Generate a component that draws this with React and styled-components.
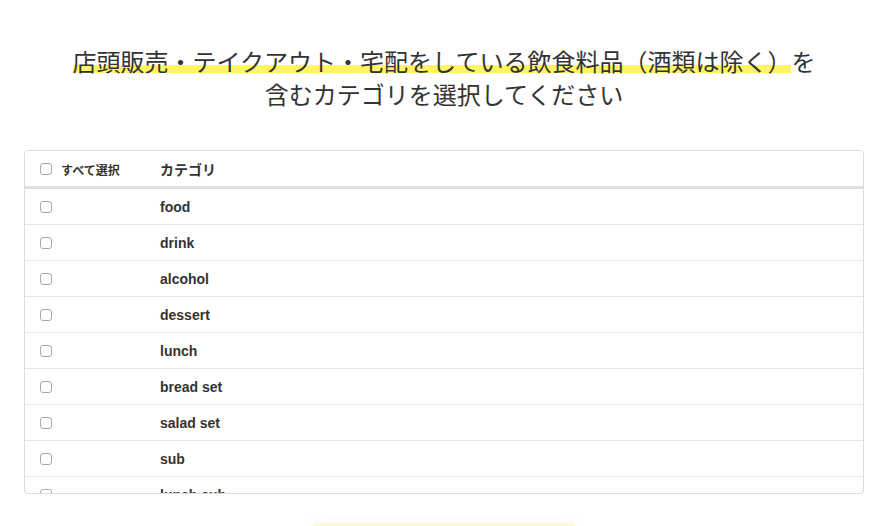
import { createGlobalStyle } from "styled-components";
import styled from "styled-components";

const GlobalStyle = createGlobalStyle`
  body {
    margin: 0;
    background: #fff;
    color: #333;
    font-family: "Liberation Sans", "Noto Sans CJK JP", sans-serif;
  }
`;

const Page = styled.div`
  width: 840px;
  margin-left: 24px;
  padding-top: 44px;
`;

const Title = styled.h1`
  margin: 0;
  text-align: center;
  font-family: "Noto Sans CJK JP", sans-serif;
  font-size: 24px;
  font-weight: 400;
  line-height: 33px;
  color: #333;
`;

const Marker = styled.span`
  background: linear-gradient(
    transparent 64%,
    #fff462 64%,
    #fff462 86%,
    transparent 86%
  );
`;

const TableBox = styled.div`
  margin-top: 40px;
  height: 342px;
  border: 1px solid #dcdcdc;
  border-radius: 4px;
  overflow: hidden;
`;

const Row = styled.div`
  display: grid;
  grid-template-columns: 135px 1fr;
  align-items: center;
  height: 35px;
  border-bottom: ${(p) => (p.$head ? "3px solid #e0e0e0" : "1px solid #e6e6e6")};
`;

const CheckCell = styled.label`
  display: flex;
  align-items: center;
  padding-left: 15px;
  padding-top: 1px;
  font-family: "Noto Sans CJK JP", sans-serif;
  font-size: 12px;
  font-weight: 700;
  color: #333;
`;

const Box = styled.input.attrs({ type: "checkbox" })`
  appearance: none;
  width: 12px;
  height: 12px;
  margin: 0 9px 0 0;
  border: 1px solid #a9a9a9;
  border-radius: 3px;
  background: #fff;
`;

const HeadLabel = styled.div`
  font-family: "Noto Sans CJK JP", sans-serif;
  font-size: 14px;
  font-weight: 700;
  color: #333;
`;

const Name = styled.div`
  font-family: "Liberation Sans", "Noto Sans CJK JP", sans-serif;
  font-size: 14px;
  font-weight: 700;
  color: #333;
`;

const Footer = styled.div`
  display: flex;
  justify-content: center;
  padding-top: 29px;
`;

const Button = styled.button`
  width: 262px;
  height: 44px;
  border: none;
  border-radius: 4px;
  background: #fdf8d6;
  box-shadow: 0 0 12px rgba(0, 0, 0, 0.04);
`;

const categories = [
  "food",
  "drink",
  "alcohol",
  "dessert",
  "lunch",
  "bread set",
  "salad set",
  "sub",
  "lunch sub",
  "dinner",
];

export default function App() {
  return (
    <>
      <GlobalStyle />
      <Page>
        <Title>
          <Marker>店頭販売・テイクアウト・宅配をしている飲食料品（酒類は除く）</Marker>を
          <br />
          含むカテゴリを選択してください
        </Title>
        <TableBox>
          <Row $head>
            <CheckCell>
              <Box />
              すべて選択
            </CheckCell>
            <HeadLabel>カテゴリ</HeadLabel>
          </Row>
          {categories.map((c) => (
            <Row key={c}>
              <CheckCell>
                <Box />
              </CheckCell>
              <Name>{c}</Name>
            </Row>
          ))}
        </TableBox>
        <Footer>
          <Button aria-label="次へ" />
        </Footer>
      </Page>
    </>
  );
}
